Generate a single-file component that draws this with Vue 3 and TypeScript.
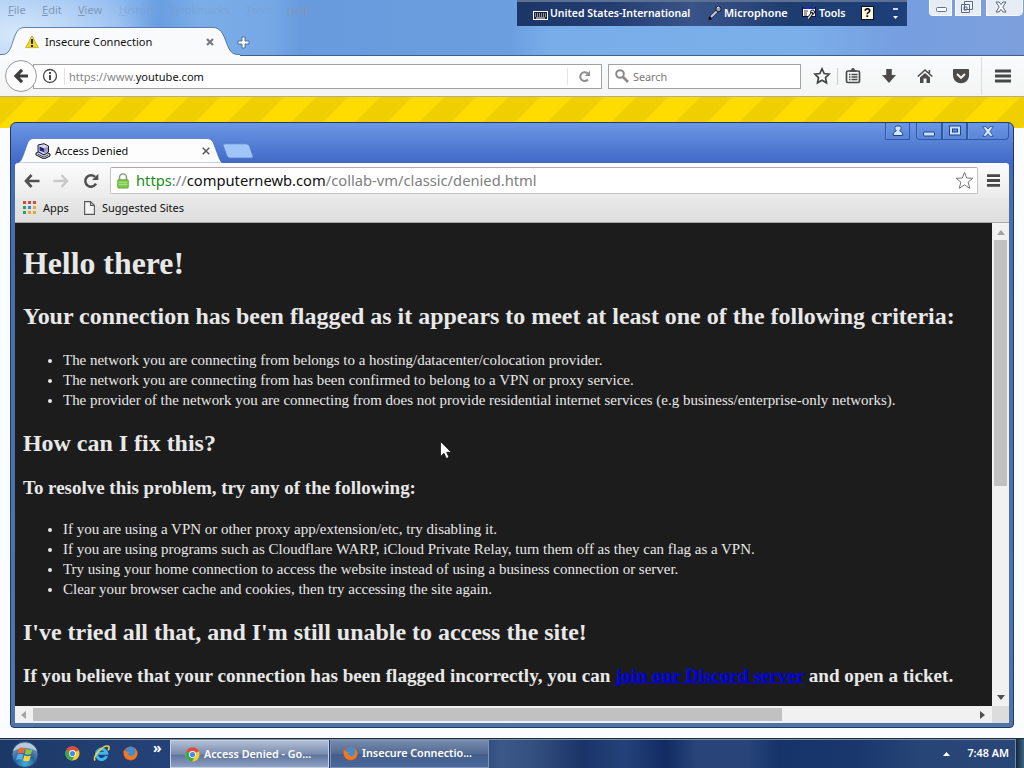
<template>
  <div class="desktop">
    <!-- firefox, behind -->
    <div class="firefox">
      <div class="ff-menu">
        <span v-for="item in menu" :key="item.name" :class="['menu-item', item.faded ? 'faded' : '']"
          :style="{ width: item.width + 'px' }"><u>{{ item.name[0] }}</u>{{ item.name.slice(1) }}</span>
      </div>
      <div class="ff-tabs">
        <svg class="ff-tab-shape" width="240" height="29" viewBox="0 0 240 29">
          <path d="M0 27.5 H3 C15 27 11 .7 24 .5 H213 C228 .7 224 27 237 27.5 H240 V29 H0Z" fill="#f8fafc" />
          <path d="M0 27.5 H3 C15 27 11 .7 24 .5 H213 C228 .7 224 27 237 27.5 H240" fill="none" stroke="#3f659b" stroke-width=".8" />
        </svg>
        <div class="ff-tab">
          <svg width="14" height="14" viewBox="0 0 14 14">
            <path d="M7 .8 L13.4 12.6 H.6Z" fill="#ecd829" stroke="#cdb928" stroke-linejoin="round" />
            <path d="M7 4 V8.7 M7 10 V12" stroke="#2c2410" stroke-width="2" />
          </svg>
          <span class="ff-title">Insecure Connection</span>
          <svg class="ff-close" width="8" height="8" viewBox="0 0 8 8">
            <path d="M1 1 L7 7 M7 1 L1 7" stroke="#757b80" stroke-width="2.2" />
          </svg>
        </div>
        <svg class="ff-plus" width="13" height="13" viewBox="0 0 13 13">
          <path d="M5 1H8V5H12V8H8V12H5V8H1V5H5Z" fill="#fff" stroke="#45678f" stroke-width=".9" />
        </svg>
      </div>
      <div class="ff-nav">
        <div class="ff-back">
          <svg width="16" height="16" viewBox="0 0 16 16">
            <path d="M9 1.8 L3 8 L9 14.2 M3 8 H15" fill="none" stroke="#3d3d3d" stroke-width="3.2" />
          </svg>
        </div>
        <div class="ff-url">
          <svg width="16" height="16" viewBox="0 0 16 16">
            <circle cx="8" cy="8" r="6.5" fill="none" stroke="#484848" stroke-width="1.3" />
            <path d="M8 7V12 M8 4V6" stroke="#333" stroke-width="1.8" />
          </svg>
          <i class="sep"></i>
          <span class="ff-address"><em>https://www.</em>youtube.com</span>
          <div class="ff-reload">
            <svg width="13" height="13" viewBox="0 0 13 13">
              <path d="M10 9.5 A4.4 4.4 0 1 1 9.5 3.3" fill="none" stroke="#8f8f8f" stroke-width="2" />
              <path d="M12 .8V6H6.8Z" fill="#8f8f8f" />
            </svg>
          </div>
        </div>
        <div class="ff-search">
          <svg width="14" height="14" viewBox="0 0 14 14">
            <circle cx="5" cy="5" r="3.8" fill="none" stroke="#8a8a8a" stroke-width="2" />
            <path d="M8 8 L13 13" stroke="#8a8a8a" stroke-width="2.6" />
          </svg>
          <span>Search</span>
        </div>
        <div class="ff-icons">
          <svg width="18" height="18" viewBox="0 0 18 18">
            <path d="M9 1.8 L11.2 6.5 L16.2 7.1 L12.5 10.6 L13.5 15.8 L9 13.2 L4.5 15.8 L5.5 10.6 L1.8 7.1 L6.8 6.5Z"
              fill="none" stroke="#444" stroke-width="1.7" />
          </svg>
          <i class="sep"></i>
          <svg width="18" height="18" viewBox="0 0 18 18">
            <rect x="2.5" y="4" width="13" height="11.5" rx="1.5" fill="none" stroke="#4a4a4a" stroke-width="1.7" />
            <path d="M5 7.5H6.5 M7.5 7.5H13.5 M5 10H6.5 M7.5 10H13.5 M5 12.5H6.5 M7.5 12.5H13.5" stroke="#4a4a4a"
              stroke-width="1.3" />
            <path d="M5.5 4.8V3.2H7 Q7.3 1 9 1 T11 3.2H12.5V4.8Z" fill="#4a4a4a" />
          </svg>
          <svg width="18" height="18" viewBox="0 0 18 18">
            <path d="M6.2 2H11.8V8H16L9 16L2 8H6.2Z" fill="#4d4b49" />
          </svg>
          <svg width="18" height="18" viewBox="0 0 18 18">
            <path d="M1.8 9.5 L9 3 L16.2 9.5 M13.4 3V6" fill="none" stroke="#4d4b49" stroke-width="1.6" />
            <path d="M4 10.4 L9 6 L14 10.4V16H10.5V11.5H7.5V16H4Z" fill="#4d4b49" />
          </svg>
          <svg width="18" height="18" viewBox="0 0 18 18">
            <path d="M2 2H16Q17 2 17 3V8C17 19 1 19 1 8V3Q1 2 2 2Z" fill="#4d4b49" />
            <path d="M5 7 L9 10.8 L13 7" fill="none" stroke="#f6f6f6" stroke-width="2" />
          </svg>
        </div>
        <div class="ff-burger">
          <svg width="16" height="14" viewBox="0 0 16 14">
            <path d="M0 2H16 M0 7H16 M0 12H16" stroke="#474747" stroke-width="2.8" />
          </svg>
        </div>
      </div>
      <div class="ff-stripes"></div>
    </div>

    <!-- firefox caption buttons -->
    <div class="ff-controls">
      <div class="min">
        <svg width="14" height="14" viewBox="0 0 14 14">
          <rect x="2.5" y="7.5" width="10" height="4" rx="1" fill="#fff" stroke="#62738f" />
        </svg>
      </div>
      <div class="max">
        <svg width="14" height="14" viewBox="0 0 14 14">
          <path d="M4.5 1.5H12.5V9.5H4.5Z M1.5 4.5H9.5V12.5H1.5Z M4 7H7V10H4Z" fill="#f1f4f8" stroke="#5a6a86" />
        </svg>
      </div>
      <div class="close">
        <svg width="12" height="12" viewBox="0 0 12 12">
          <path d="M1 1H4L6 3.5L8 1H11L7.8 6L11 11H8L6 8.3L4 11H1L4.2 6Z" fill="#fff" stroke="#566580" />
        </svg>
      </div>
    </div>

    <!-- language bar -->
    <div class="langbar">
      <svg class="lb-kbd" width="15" height="9" viewBox="0 0 15 9">
        <rect x=".5" y=".5" width="14" height="8" fill="#182137" stroke="#fff" />
        <path d="M2 3H13 M2 5H13" stroke="#fff" stroke-dasharray="1 1" />
        <path d="M3 7H12" stroke="#fff" />
      </svg>
      <span class="lb-lang">United States-International</span>
      <svg width="14" height="16" viewBox="0 0 14 16">
        <path d="M9 6 L2 13 V15" fill="none" stroke="#101421" stroke-width="3" />
        <path d="M9 6 L3 12" stroke="#c9d0dc" stroke-width="2" />
        <circle cx="10.5" cy="4" r="2.7" fill="#9aa4b5" stroke="#111827" />
        <path d="M9 3 L11 2" stroke="#fff" />
      </svg>
      <span class="lb-mic">Microphone</span>
      <svg width="15" height="14" viewBox="0 0 15 14">
        <rect x=".5" y="1.5" width="13" height="9" fill="#fff" stroke="#0b1240" />
        <path d="M1 2H13" stroke="#1a2bb0" stroke-width="2" />
        <path d="M2 5H6 M2 7H5 M2 9H5" stroke="#444" />
        <path d="M6 12.5 L11 6.5" stroke="#111" stroke-width="3" />
        <circle cx="10.5" cy="6" r="2" fill="none" stroke="#111" />
        <path d="M6 12.5 L10 7.5" stroke="#dfe3ea" stroke-width="1.3" />
      </svg>
      <span class="lb-tools">Tools</span>
      <div class="lb-help">?</div>
      <svg class="lb-opts" width="7" height="13" viewBox="0 0 7 13">
        <path d="M1 2H6" stroke="#fff" stroke-width="1.6" />
        <path d="M1 9H6L3.5 12Z" fill="#fff" />
      </svg>
    </div>

    <!-- chrome, in front -->
    <div class="chrome">
      <div class="cr-title">
        <div class="cr-tab">
          <svg class="cr-tab-shape" width="208" height="25" viewBox="0 0 208 25">
            <path d="M0 25 C6 25 6 22 8 18 L13 4 Q15 .5 18 .5 H192 Q196 .5 198 4 L204 20 Q206 25 208 25Z" fill="#fdfdfe"
              stroke="#3c61a8" stroke-width=".6" />
          </svg>
          <svg class="cr-fav" width="16" height="16" viewBox="0 0 16 16">
            <path d="M1 10 L7 7 L15 11 V13 L9 16 L1 12Z" fill="#c4c4d4" stroke="#111126" />
            <path d="M3 2 L9 .7 L13.5 3 V9 L9 12 L3 8.5Z" fill="#d9d9e8" stroke="#18182c" />
            <path d="M4.5 3.5 L9 5.6V9.3 L4.5 7.4Z" fill="#22228a" />
            <path d="M9 5V11 L13 8.6V3.7Z" fill="#9d9dba" />
            <path d="M3 11.3 L9 14.2 L13 12" fill="none" stroke="#555570" />
          </svg>
          <span>Access Denied</span>
          <svg class="cr-x" width="8" height="8" viewBox="0 0 8 8">
            <path d="M.7 .7 L7.3 7.3 M7.3 .7 L.7 7.3" stroke="#5a5a5a" stroke-width="1.5" />
          </svg>
        </div>
        <svg class="cr-new" width="32" height="16" viewBox="0 0 32 16">
          <path d="M1 2 Q.5 .8 3 .8 H24 Q26.5 .8 27.5 3 L31 13.5 Q31.2 15 29 15 H8 Q6 15 5 13Z" fill="#a0c6f8"
            stroke="#547fc8" stroke-width=".8" />
        </svg>
      </div>
      <div class="cr-controls">
        <div class="user">
          <svg width="12" height="12" viewBox="0 0 12 12">
            <path d="M6 1 A2.4 2.4 0 0 1 7.6 5.6 L10.7 8V10.5H1.3V8L4.4 5.6 A2.4 2.4 0 0 1 6 1Z" fill="#d2e6ff"
              stroke="#1e4488" />
          </svg>
        </div>
        <div class="min">
          <svg width="12" height="12" viewBox="0 0 12 12">
            <rect x=".5" y="7" width="11" height="4" rx="1" fill="#c9e1ff" stroke="#1e4488" />
          </svg>
        </div>
        <div class="max">
          <svg width="12" height="12" viewBox="0 0 12 12">
            <rect x="2" y="2.5" width="8" height="6" fill="none" stroke="#1e4488" stroke-width="4" />
            <rect x="2" y="2.5" width="8" height="6" fill="none" stroke="#c9e1ff" stroke-width="2" />
          </svg>
        </div>
        <div class="close">
          <svg width="12" height="11" viewBox="0 0 12 11">
            <path d="M.7 .7H4L6 3L8 .7H11.3L8 5.4L11.3 10.3H8L6 7.8L4 10.3H.7L4 5.4Z" fill="#d5e8ff" stroke="#24498e"
              stroke-width=".8" />
          </svg>
        </div>
      </div>
      <div class="cr-toolbar">
        <svg width="16" height="14" viewBox="0 0 16 14">
          <path d="M7.5 1 L2 7 L7.5 13 M2 7H15.5" fill="none" stroke="#505050" stroke-width="2.6" />
        </svg>
        <svg class="fwd" width="16" height="14" viewBox="0 0 16 14">
          <path d="M8.5 1 L14 7 L8.5 13 M14 7H.5" fill="none" stroke="#c9c9c9" stroke-width="2.4" />
        </svg>
        <svg class="rel" width="16" height="16" viewBox="0 0 16 16">
          <path d="M13 10.7 A5.7 5.7 0 1 1 12 3.9" fill="none" stroke="#505050" stroke-width="2.5" />
          <path d="M15.3 .8V7H9Z" fill="#505050" />
        </svg>
        <div class="cr-omni">
          <svg width="12" height="16" viewBox="0 0 12 16">
            <path d="M2.5 8V4.5 A3.5 3.5 0 0 1 9.5 4.5V8" fill="none" stroke="#8e9a8a" stroke-width="1.6" />
            <rect x=".8" y="6.8" width="10.4" height="8.2" rx=".6" fill="#83cb50" stroke="#5da535" />
            <path d="M1.5 9.3H10.5 M1.5 11.5H10.5" stroke="#a9e37d" />
          </svg>
          <span class="cr-address"><b>https</b><em>://</em>computernewb.com<em>/collab-vm/classic/denied.html</em></span>
          <svg class="star" width="19" height="19" viewBox="0 0 19 19">
            <path d="M9.5 1.3 L11.7 7 L17.8 7.3 L13.1 11.1 L14.8 17.3 L9.5 13.9 L4.2 17.3 L5.9 11.1 L1.2 7.3 L7.3 7Z"
              fill="#fff" stroke="#777" stroke-linejoin="round" />
          </svg>
        </div>
        <svg class="cr-burger" width="13" height="13" viewBox="0 0 13 13">
          <path d="M0 1.7H13 M0 6.5H13 M0 11.3H13" stroke="#484848" stroke-width="2.8" />
        </svg>
      </div>
      <div class="cr-bookmarks">
        <div class="apps">
          <i v-for="(c, i) in appColors" :key="i" :style="{ background: c }"></i>
        </div>
        <span class="bm-apps">Apps</span>
        <svg width="11" height="14" viewBox="0 0 11 14">
          <path d="M.6 .6H6.5L10.4 4.5V13.4H.6Z M6.5 .6V4.5H10.4" fill="#f4f4f4" stroke="#555" stroke-width="1.1" />
        </svg>
        <span class="bm-sites">Suggested Sites</span>
      </div>
      <div class="cr-view">
        <div class="page">
          <h1>Hello there!</h1>
          <h2>Your connection has been flagged as it appears to meet at least one of the following criteria:</h2>
          <ul>
            <li v-for="line in criteria" :key="line">{{ line }}</li>
          </ul>
          <h2>How can I fix this?</h2>
          <h3 class="resolve">To resolve this problem, try any of the following:</h3>
          <ul>
            <li v-for="line in steps" :key="line">{{ line }}</li>
          </ul>
          <h2>I've tried all that, and I'm still unable to access the site!</h2>
          <h3 class="believe">If you believe that your connection has been flagged incorrectly, you can <a>join our Discord server</a> and open a ticket.</h3>
        </div>
        <div class="vscroll">
          <svg width="8" height="5" viewBox="0 0 8 5"><path d="M4 0L8 5H0Z" fill="#a3a3a3" /></svg>
          <div class="thumb"></div>
          <svg width="8" height="5" viewBox="0 0 8 5"><path d="M0 0H8L4 5Z" fill="#505050" /></svg>
        </div>
        <div class="hscroll">
          <svg width="5" height="8" viewBox="0 0 5 8"><path d="M5 0V8L0 4Z" fill="#a3a3a3" /></svg>
          <div class="thumb"></div>
          <svg width="5" height="8" viewBox="0 0 5 8"><path d="M0 0L5 4L0 8Z" fill="#505050" /></svg>
        </div>
        <div class="corner"></div>
      </div>
    </div>

    <div class="taskbar">
      <svg class="orb" width="28" height="28" viewBox="0 0 28 28">
        <defs>
          <radialGradient id="orb" cx=".5" cy=".85" r=".75">
            <stop offset="0" stop-color="#3fb0d8" />
            <stop offset=".5" stop-color="#27649c" />
            <stop offset="1" stop-color="#7f9cba" />
          </radialGradient>
        </defs>
        <circle cx="14" cy="14.5" r="13" fill="url(#orb)" stroke="#26456f" />
        <path d="M2 11 A13 13 0 0 1 26 11 Q14 5 2 11Z" fill="#dbe5ee" opacity=".65" />
        <path d="M8 8.5 Q11 6.5 14 8.5 L12.7 13.5 Q10 12 6.7 13.5Z" fill="#ee6a2c" />
        <path d="M15 9 Q18 10.5 21.5 9 L20 14 Q17 15.5 13.7 14Z" fill="#8fc63d" />
        <path d="M6.4 14.7 Q9.5 13 12.4 14.7 L11 20 Q8 18.3 5 20Z" fill="#56aeea" />
        <path d="M13.4 15.3 Q16.5 17 19.8 15.3 L18.3 20.8 Q15 22 12 20.5Z" fill="#fcd23b" />
      </svg>
      <svg class="ql-chrome" width="15" height="15" viewBox="0 0 16 16">
        <circle cx="8" cy="8" r="7.5" fill="#f6cb2f" />
        <path d="M8 8 L1.3 4.4 A7.6 7.6 0 0 1 14.8 4.5Z" fill="#e1493a" />
        <path d="M8 8 L1.4 4.3 A7.6 7.6 0 0 0 7.5 15.5 L10.5 10Z" fill="#3fa552" />
        <circle cx="8" cy="8" r="3.7" fill="#fff" />
        <circle cx="8" cy="8" r="2.8" fill="#4a89dc" />
      </svg>
      <svg class="ql-ie" width="17" height="17" viewBox="0 0 17 17">
        <path d="M13.6 11 A5.2 5.2 0 1 1 13.8 8.3 H5" fill="none" stroke="#3db5f0" stroke-width="3" />
        <path d="M2.2 15.5 C-1 12 10 -.5 15.5 1.2 C16.6 1.8 16 4 15 5.4" fill="none" stroke="#f4cf45" stroke-width="1.6" />
      </svg>
      <svg class="ql-ff" width="15" height="15" viewBox="0 0 16 16">
        <circle cx="8" cy="8" r="7.5" fill="#e2581f" />
        <circle cx="8.3" cy="6" r="5.2" fill="#3d8fd0" />
        <path d="M1 4 Q3 7 7 6.5 L5 8.5 Q7 12 11 10 Q14.5 7.5 12.5 2.5 Q18 8 13 13 Q7 17 2.5 12 Q0 8 1 4Z" fill="#ee7a26" />
      </svg>
      <span class="more">»</span>
      <div class="task active">
        <svg width="15" height="15" viewBox="0 0 16 16">
          <circle cx="8" cy="8" r="7.5" fill="#f6cb2f" />
          <path d="M8 8 L1.3 4.4 A7.6 7.6 0 0 1 14.8 4.5Z" fill="#e1493a" />
          <path d="M8 8 L1.4 4.3 A7.6 7.6 0 0 0 7.5 15.5 L10.5 10Z" fill="#3fa552" />
          <circle cx="8" cy="8" r="3.7" fill="#fff" />
          <circle cx="8" cy="8" r="2.8" fill="#4a89dc" />
        </svg>
        <span>Access Denied - Go...</span>
      </div>
      <div class="task second">
        <svg width="15" height="15" viewBox="0 0 16 16">
          <circle cx="8" cy="8" r="7.5" fill="#e2581f" />
          <circle cx="8.3" cy="6" r="5.2" fill="#3d8fd0" />
          <path d="M1 4 Q3 7 7 6.5 L5 8.5 Q7 12 11 10 Q14.5 7.5 12.5 2.5 Q18 8 13 13 Q7 17 2.5 12 Q0 8 1 4Z" fill="#ee7a26" />
        </svg>
        <span>Insecure Connectio...</span>
      </div>
      <svg class="tray" width="7" height="4" viewBox="0 0 7 4"><path d="M3.5 0L7 4H0Z" fill="#fff" /></svg>
      <span class="clock">7:48 AM</span>
      <div class="peek"></div>
    </div>

    <svg class="cursor" width="12" height="19" viewBox="0 0 12 19">
      <path d="M.5 .5V15.5L4 12.3L6.3 17.5L9 16.3L6.7 11.3H11.3Z" fill="#fff" stroke="#111" stroke-width=".8" />
    </svg>
  </div>
</template>

<script setup lang="ts">
interface MenuItem {
  name: string
  width: number
  faded?: boolean
}

// width is the distance to the next entry
const menu: MenuItem[] = [
  { name: 'File', width: 34 },
  { name: 'Edit', width: 36 },
  { name: 'View', width: 41 },
  { name: 'History', width: 52, faded: true },
  { name: 'Bookmarks', width: 75, faded: true },
  { name: 'Tools', width: 41, faded: true },
  { name: 'Help', width: 30 },
]

const appColors = ['#d9483b', '#d9483b', '#d9483b', '#35a05a', '#3f7fe0', '#e8a92d', '#35a05a', '#e8a92d', '#e8a92d']

const criteria: string[] = [
  'The network you are connecting from belongs to a hosting/datacenter/colocation provider.',
  'The network you are connecting from has been confirmed to belong to a VPN or proxy service.',
  'The provider of the network you are connecting from does not provide residential internet services (e.g business/enterprise-only networks).',
]

const steps: string[] = [
  'If you are using a VPN or other proxy app/extension/etc, try disabling it.',
  'If you are using programs such as Cloudflare WARP, iCloud Private Relay, turn them off as they can flag as a VPN.',
  'Try using your home connection to access the website instead of using a business connection or server.',
  'Clear your browser cache and cookies, then try accessing the site again.',
]
</script>

<style>
body {
  margin: 0;
  overflow: hidden;
}
</style>

<style scoped>
.desktop {
  position: relative;
  width: 1024px;
  height: 768px;
  overflow: hidden;
  display: flex;
  flex-direction: column;
  font-family: "Noto Sans", "Open Sans", sans-serif;
  font-size: 11px;
  color: #111;
  white-space: nowrap;
}

.desktop * {
  box-sizing: border-box;
}

svg {
  display: block;
  flex: none;
}

em,
i {
  font-style: normal;
}

/* ---- firefox ---- */
.firefox {
  height: 738px;
  display: flex;
  flex-direction: column;
  background: radial-gradient(ellipse 130px 60px at 20px 35px, rgba(235, 245, 255, .75), rgba(235, 245, 255, 0)) 0 0 / 1024px 56px no-repeat,
    linear-gradient(90deg, #a0c5f2 0, #8cb8ee 120px, #6a9ee2 160px, #7bade8 200px, #76a8e6 270px, #679bdd 300px, #6a9edf 510px, #79ade9 550px, #7bafea 800px, #769ee0 900px, #7da0dc 100%) 0 0 / 1024px 56px no-repeat,
    #fbfcfe;
}

.ff-menu {
  height: 27px;
  padding: 2px 0 0 8px;
  display: flex;
  line-height: 15px;
  color: #8198ba;
}

.menu-item.faded {
  opacity: 0.35;
}

.ff-tabs {
  height: 29px;
  display: flex;
  position: relative;
  border-bottom: 1px solid #3f5f8e;
}

.ff-tab-shape {
  position: absolute;
  left: 0;
  top: 0;
}

.ff-tab {
  position: relative;
  width: 236px;
  padding: 0 0 0 25px;
  display: flex;
  align-items: center;
  height: 29px;
}

.ff-title {
  margin-left: 6px;
  width: 160px;
  font-size: 11.1px;
}

.ff-close {
  margin-left: 1px;
}

.ff-plus {
  margin: 9px 0 0 1px;
}

.ff-nav {
  height: 41px;
  background: linear-gradient(#f9fbfc, #f4f4f4);
  border-bottom: 1px solid #b5ad8a;
  display: flex;
  align-items: center;
  padding-left: 5px;
}

.ff-back {
  width: 32px;
  height: 32px;
  border: 1px solid #9b9b9b;
  border-radius: 50%;
  background: #fcfcfc;
  display: flex;
  align-items: center;
  justify-content: center;
  z-index: 1;
  flex: none;
}

.ff-url {
  width: 569px;
  height: 25px;
  margin-left: -4px;
  padding-left: 8px;
  background: #fff;
  border: 1px solid #a3a3a3;
  display: flex;
  align-items: center;
}

.sep {
  width: 1px;
  height: 17px;
  background: #ccc;
}

.ff-url .sep {
  margin: 0 4px 0 6px;
  background: #e3e3e3;
}

.ff-address {
  flex: 1;
  font-size: 11.05px;
}

.ff-address em {
  color: #858585;
}

.ff-reload {
  width: 34px;
  height: 17px;
  padding: 2px 0 0 10px;
  border-left: 1px solid #e6e6e6;
}

.ff-search {
  width: 193px;
  height: 25px;
  margin-left: 6px;
  padding-left: 6px;
  background: #fff;
  border: 1px solid #a3a3a3;
  display: flex;
  align-items: center;
  gap: 4px;
  font-size: 10.8px;
  color: #777;
}

.ff-icons {
  display: flex;
  align-items: center;
  gap: 18px;
  margin-left: 12px;
}

.ff-icons .sep {
  margin: 0 -12px 0 -12px;
}

.ff-burger {
  height: 38px;
  margin-left: 11px;
  padding: 12px 0 0 13px;
  border-left: 1px solid #dcdcdc;
}

.ff-stripes {
  height: 31px;
  background: repeating-linear-gradient(135deg, #f0cf02 0, #f0cf02 19px, #ffdc00 21px, #ffdc00 41.5px, #f0cf02 43.5px, #f0cf02 45.25px);
}

.ff-controls {
  position: absolute;
  left: 929px;
  top: 0;
  display: flex;
  gap: 3px;
}

.ff-controls div {
  width: 23px;
  height: 16px;
  background: #e7edf5;
  border: 1px solid #f6f9fd;
  border-top: 0;
  display: flex;
  justify-content: center;
}

.ff-controls .min {
  border-radius: 0 0 0 4px;
}

.ff-controls .max {
  width: 26px;
  padding-right: 2px;
}

.ff-controls .close {
  width: 37px;
  margin-left: 2px;
  padding: 1px 7px 0 0;
  border-radius: 0 0 5px 0;
}

/* ---- language bar ---- */
.langbar {
  position: absolute;
  left: 517px;
  top: 0;
  width: 390px;
  height: 26px;
  padding-left: 16px;
  display: flex;
  align-items: center;
  background: linear-gradient(90deg, #1b3667, #243d72 25%, #3a5489 45%, #1e3c70 70%, #1d4079);
  border-top: 2px solid #5b7093;
  color: #fff;
  font-weight: 600;
  line-height: 22px;
  padding-bottom: 2px;
}

.lb-kbd {
  margin-top: 4px;
}

.lb-lang {
  margin-left: 2px;
  width: 158px;
  font-size: 10.5px;
}

.lb-mic {
  margin-left: 2px;
  width: 78px;
  font-size: 10.9px;
}

.lb-tools {
  margin-left: 2px;
  width: 42px;
  font-size: 10.6px;
}

.lb-help {
  width: 13px;
  height: 14px;
  background: #fdfbe0;
  border: 1px solid #0b0f18;
  color: #000;
  font: bold 12px/12px "Liberation Sans", sans-serif;
  text-align: center;
}

.lb-opts {
  margin-left: 18px;
}

/* ---- chrome ---- */
.chrome {
  position: absolute;
  left: 10px;
  top: 122px;
  width: 1004px;
  height: 606px;
  padding: 0 4px 4px 4px;
  border: 1px solid #1e3a68;
  border-radius: 6px 6px 4px 4px;
  background: linear-gradient(#6b97e5, #4069c6 40px, #456fae 60px, #4d75a8);
  display: flex;
  flex-direction: column;
}

.cr-title {
  height: 40px;
  display: flex;
  align-items: flex-end;
  flex: none;
}

.cr-tab {
  position: relative;
  width: 208px;
  height: 25px;
  display: flex;
  align-items: center;
  padding-left: 20px;
}

.cr-tab-shape {
  position: absolute;
  left: 0;
  top: 0;
}

.cr-fav,
.cr-tab span,
.cr-x {
  position: relative;
}

.cr-tab span {
  margin-left: 4px;
  width: 147px;
  font-size: 10.9px;
}

.cr-new {
  margin: 0 0 4px -1px;
}

.cr-controls {
  position: absolute;
  right: 4px;
  top: 0;
  display: flex;
}

.cr-controls div {
  height: 17px;
  border: 1px solid #3159a2;
  border-top: 0;
  box-shadow: inset 1px 0 #6c98e2;
  display: flex;
  align-items: center;
  justify-content: center;
}

.cr-controls .user {
  width: 25px;
  margin-right: 6px;
}

.cr-controls .min {
  width: 26px;
  border-radius: 0 0 0 4px;
}

.cr-controls .max {
  width: 25px;
}

.cr-controls .close {
  width: 42px;
  border-radius: 0 0 4px 0;
}

.cr-toolbar {
  height: 35px;
  background: linear-gradient(#fcfcfd, #ebebeb);
  border-radius: 3px 3px 0 0;
  display: flex;
  align-items: center;
  padding-left: 9px;
  flex: none;
}

.fwd {
  margin-left: 13px;
}

.rel {
  margin-left: 14px;
}

.cr-omni {
  width: 868px;
  height: 27px;
  margin-left: 11px;
  padding: 0 3px 0 6px;
  background: #fff;
  border: 1px solid #c2c0c0;
  border-top-color: #b9a5a8;
  border-radius: 2px;
  display: flex;
  align-items: center;
}

.cr-address {
  margin: -2px 0 0 7px;
  flex: 1;
  font-size: 14.73px;
}

.cr-address b {
  color: #159015;
  font-weight: 400;
}

.cr-address em {
  color: #808080;
}

.cr-burger {
  margin-left: 9px;
}

.cr-bookmarks {
  height: 25px;
  background: linear-gradient(#e8e8e8, #dedede);
  border-bottom: 1px solid #a9a9a9;
  display: flex;
  align-items: center;
  padding: 0 0 5px 8px;
  flex: none;
}

.apps {
  display: grid;
  grid-template-columns: repeat(3, 3px);
  gap: 2px;
  width: 13px;
}

.apps i {
  height: 3px;
}

.bm-apps {
  margin-left: 7px;
  width: 41px;
}

.bm-sites {
  margin-left: 7px;
}

.cr-view {
  flex: 1;
  display: grid;
  grid-template-columns: 977px 17px;
  grid-template-rows: 483px 17px;
  background: #f1f1f1;
}

.page {
  background: #1c1c1c;
  color: #e8e8e8;
  padding: 0 8px;
  overflow: hidden;
  font: 14.96px/20px "Liberation Serif", "Times New Roman", serif;
}

.page h1 {
  font-size: 31.8px;
  line-height: 37px;
  margin: 22px 0 21.44px;
}

.page h2 {
  font-size: 23.95px;
  line-height: 27px;
  margin: 19.92px 0;
}

.page h3 {
  line-height: 22px;
  margin: 18.72px 0;
}

.page .resolve {
  font-size: 18.97px;
}

.page .believe {
  font-size: 19.12px;
}

.page ul {
  margin: 19.5px 0;
  padding-left: 40px;
}

.page a {
  color: #0000ee;
  text-decoration: underline;
  text-decoration-skip-ink: none;
  text-underline-offset: 1px;
}

.vscroll {
  display: flex;
  flex-direction: column;
  align-items: center;
  padding: 7px 0 6px;
}

.vscroll .thumb {
  width: 13px;
  height: 246px;
  margin: 5px 0 auto;
  background: #c1c1c1;
}

.hscroll {
  display: flex;
  align-items: center;
  padding: 0 7px 0 6px;
}

.hscroll .thumb {
  width: 749px;
  height: 13px;
  margin: 0 auto 0 7px;
  background: #c1c1c1;
}

.corner {
  background: #dcdcdc;
}

/* ---- taskbar ---- */
.taskbar {
  height: 30px;
  display: flex;
  align-items: center;
  background: linear-gradient(90deg, #1c3867, #244277 15%, #1b3b70 45%, #3c5888 49%, #34507f 52%, #1a3468 57%, #24427a 61%, #122c62 65%, #284479 68%, #284479 73%, #17346a 76%, #1a386d 84%, #284577 90%, #284676);
  border-top: 1px solid #1d2e44;
  box-shadow: inset 0 1px #7d8ea3;
  color: #fff;
  padding-left: 11px;
}

.ql-chrome {
  margin-left: 26px;
}

.ql-ie {
  margin-left: 13px;
}

.ql-ff {
  margin-left: 13px;
}

.more {
  margin: -12px 0 0 15px;
  width: 17px;
  font-size: 14px;
  line-height: 15px;
  font-weight: 700;
}

.task {
  width: 159px;
  height: 28px;
  margin-top: 1px;
  padding: 0 0 2px 14px;
  border: 1px solid #7e93b6;
  display: flex;
  align-items: center;
  gap: 4px;
  font-weight: 600;
  font-size: 10.75px;
  background: linear-gradient(#7489ae, #52698f 50%, #445e8b 51%, #49689c);
}

.task.active {
  padding-bottom: 0;
  border-color: #c6d2e4;
  background: linear-gradient(#b2bed5, #7a8bad 50%, #60759e 55%, #8ea1c2);
}

.task.second {
  margin-left: 1px;
  padding-left: 12px;
}

.tray {
  margin: 1px 0 0 auto;
}

.clock {
  margin: -2px 0 0 17px;
  font-weight: 600;
  font-size: 10.8px;
}

.peek {
  width: 9px;
  height: 29px;
  margin-left: 6px;
  background: linear-gradient(90deg, #12253f, #3c6580);
  border-left: 1px solid #7189a5;
}

.cursor {
  position: absolute;
  left: 440px;
  top: 441px;
}
</style>
